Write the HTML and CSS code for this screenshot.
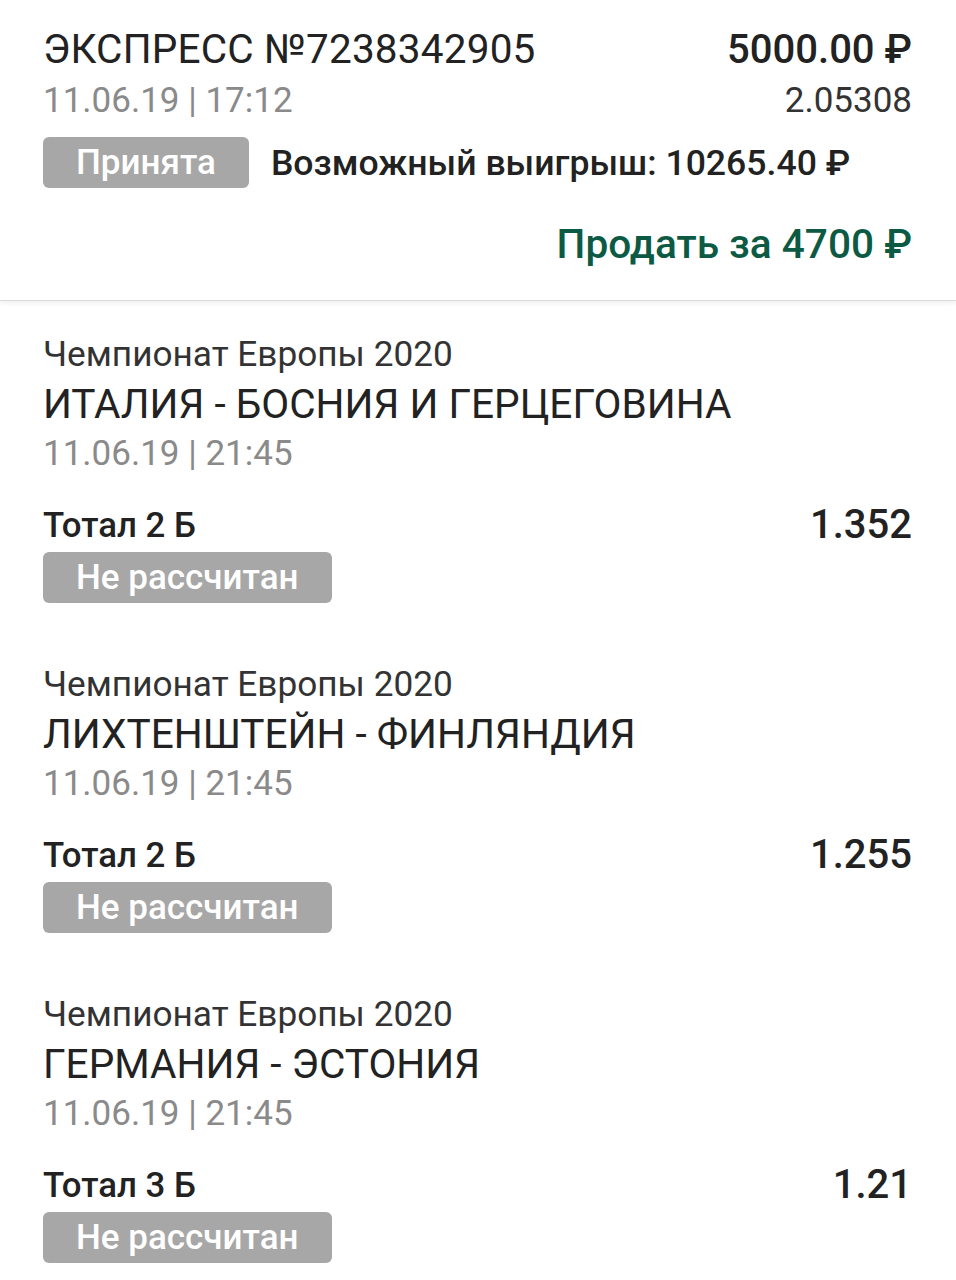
FILE: index.html
```html
<!DOCTYPE html>
<html lang="ru">
<head>
<meta charset="utf-8">
<title>Экспресс</title>
<link rel="stylesheet" href="styles.css">
</head>
<body>
<div class="page">
  <header class="head">
    <div class="row">
      <div class="title">ЭКСПРЕСС №7238342905</div>
      <div class="amount">5000.00 ₽</div>
    </div>
    <div class="row row-sub">
      <div class="date">11.06.19 | 17:12</div>
      <div class="coef">2.05308</div>
    </div>
    <div class="row-status">
      <span class="badge">Принята</span>
      <span class="win">Возможный выигрыш: 10265.40 ₽</span>
    </div>
    <div class="sell-row">
      <span class="sell">Продать за 4700 ₽</span>
    </div>
  </header>

  <section class="events">
    <div class="event">
      <div class="league">Чемпионат Европы 2020</div>
      <div class="match">ИТАЛИЯ - БОСНИЯ И ГЕРЦЕГОВИНА</div>
      <div class="edate">11.06.19 | 21:45</div>
      <div class="bet-row">
        <span class="bet">Тотал 2 Б</span>
        <span class="odds">1.352</span>
      </div>
      <span class="badge">Не рассчитан</span>
    </div>
    <div class="event">
      <div class="league">Чемпионат Европы 2020</div>
      <div class="match">ЛИХТЕНШТЕЙН - ФИНЛЯНДИЯ</div>
      <div class="edate">11.06.19 | 21:45</div>
      <div class="bet-row">
        <span class="bet">Тотал 2 Б</span>
        <span class="odds">1.255</span>
      </div>
      <span class="badge">Не рассчитан</span>
    </div>
    <div class="event">
      <div class="league">Чемпионат Европы 2020</div>
      <div class="match">ГЕРМАНИЯ - ЭСТОНИЯ</div>
      <div class="edate">11.06.19 | 21:45</div>
      <div class="bet-row">
        <span class="bet">Тотал 3 Б</span>
        <span class="odds">1.21</span>
      </div>
      <span class="badge">Не рассчитан</span>
    </div>
  </section>
</div>
</body>
</html>
```
FILE: styles.css
```css
* { box-sizing: border-box; }
html, body {
  margin: 0;
  padding: 0;
  background: #ffffff;
}
body {
  font-family: Roboto, "Noto Sans", "Liberation Sans", sans-serif;
  color: #212121;
  width: 956px;
  height: 1280px;
  overflow: hidden;
}
.page { width: 956px; }

.head {
  padding: 24px 44px 31px 43px;
  border-bottom: 1px solid #dcdcdc;
  box-shadow: 0 2px 5px rgba(0, 0, 0, 0.07);
  position: relative;
}
.row {
  display: flex;
  justify-content: space-between;
  align-items: baseline;
}
.title {
  font-size: 40.5px;
  letter-spacing: 0.2px;
  line-height: 50px;
  font-weight: 400;
  color: #222;
}
.amount {
  font-size: 40px;
  line-height: 50px;
  font-weight: 500;
  color: #222;
}
.row-sub { height: 52px; }
.date, .coef {
  font-size: 35px;
  line-height: 52px;
}
.date { color: #8a8a8a; }
.coef { color: #333; }

.row-status {
  display: flex;
  align-items: center;
  gap: 22px;
  margin-top: 10px;
}
.badge {
  display: inline-block;
  height: 51px;
  line-height: 51px;
  padding: 0 33px;
  border-radius: 6px;
  background: #a7a7a7;
  color: #ffffff;
  font-size: 35px;
  font-weight: 500;
}
.win {
  font-size: 35.6px;
  font-weight: 500;
  color: #222;
}
.sell-row {
  display: flex;
  justify-content: flex-end;
  margin-top: 31px;
}
.sell {
  font-size: 40.6px;
  line-height: 50px;
  font-weight: 500;
  color: #0c5a43;
}

.events { padding: 28px 44px 0 43px; }
.event {
  padding-bottom: 56px;
}
.league {
  font-size: 35.2px;
  line-height: 50px;
  color: #333;
}
.match {
  font-size: 40.6px;
  line-height: 50px;
  color: #222;
}
.edate {
  font-size: 35px;
  line-height: 50px;
  color: #8a8a8a;
}
.bet-row {
  display: flex;
  justify-content: space-between;
  align-items: flex-end;
  margin-top: 26px;
  height: 40px;
}
.bet {
  font-size: 34.8px;
  line-height: 40px;
  font-weight: 500;
  color: #222;
}
.odds {
  font-size: 40px;
  line-height: 40px;
  font-weight: 500;
  color: #222;
}
.event .badge { margin-top: 7px; }
```
